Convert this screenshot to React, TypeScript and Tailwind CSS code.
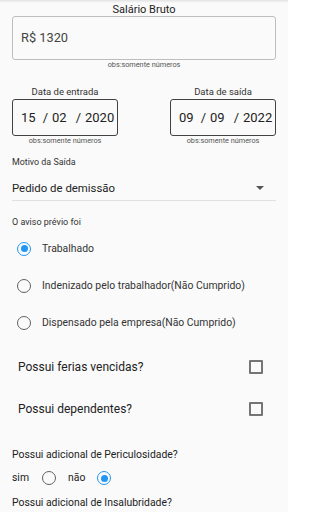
import React from "react";

const font = { fontFamily: "Roboto, 'Noto Sans', sans-serif" };

function Radio({ on }: { on?: boolean }) {
  return (
    <span
      className={`flex h-[14px] w-[14px] shrink-0 items-center justify-center rounded-full border-[1.6px] ${
        on ? "border-[#2196f3]" : "border-[#616161]"
      }`}
    >
      {on && <span className="h-[7px] w-[7px] rounded-full bg-[#2196f3]" />}
    </span>
  );
}

function Checkbox() {
  return <span className="h-[14px] w-[14px] shrink-0 rounded-[1px] border-2 border-[#757575]" />;
}

function DateField({ label, d, m, y }: { label: string; d: string; m: string; y: string }) {
  return (
    <div className="flex w-[106px] flex-col items-center">
      <div className="text-[9.5px] leading-[14px] text-[#333]">{label}</div>
      <div className="flex h-[37px] w-full items-center rounded-[3px] border border-[#424242] pl-[8px] text-[13px] leading-[16px] text-[#222]">
        <span>{d}</span>
        <span className="ml-[7px]">/</span>
        <span className="ml-[4px]">{m}</span>
        <span className="ml-[9px]">/</span>
        <span className="ml-[4px]">{y}</span>
      </div>
      <div className="text-[7.3px] leading-[10px] text-[#555]">obs:somente números</div>
    </div>
  );
}

export default function App() {
  return (
    <div
      className="h-[512px] w-[288px] overflow-hidden bg-[#fafafa] bg-[linear-gradient(to_bottom,#e2e2e2,#fafafa_3px)]"
      style={font}
    >
      <div className="px-[12px] pt-[3px]">
        {/* Salário */}
        <div className="text-center text-[11px] leading-[13px] text-[#222]">Salário Bruto</div>
        <div className="flex h-[44px] items-center rounded-[3px] border border-[#bdbdbd] px-[8px] text-[12.8px] text-[#444]">
          R$ 1320
        </div>
        <div className="text-center text-[7.3px] leading-[10px] text-[#555]">obs:somente números</div>

        {/* Datas */}
        <div className="mt-[15px] flex justify-between">
          <DateField label="Data de entrada" d="15" m="02" y="2020" />
          <DateField label="Data de saída" d="09" m="09" y="2022" />
        </div>

        {/* Motivo */}
        <div className="mt-[10px] text-[8.9px] leading-[12px] text-[#333]">Motivo da Saída</div>
        <div className="mt-[12px] flex items-center justify-between border-b border-[#e0e0e0] pb-[4px]">
          <span className="text-[11.4px] leading-[16px] text-[#222]">Pedido de demissão</span>
          <svg width="8" height="4" viewBox="0 0 10 5" className="mr-[12px]">
            <path d="M0 0 L10 0 L5 5 Z" fill="#555" />
          </svg>
        </div>

        {/* Aviso prévio */}
        <div className="mt-[15px] text-[9px] leading-[12px] text-[#333]">O aviso prévio foi</div>
        <div className="mt-[2px] flex flex-col">
          {[
            ["Trabalhado", true],
            ["Indenizado pelo trabalhador(Não Cumprido)", false],
            ["Dispensado pela empresa(Não Cumprido)", false],
          ].map(([t, on]) => (
            <div key={t as string} className="flex h-[37px] items-center">
              <span className="ml-[5px]">
                <Radio on={on as boolean} />
              </span>
              <span className="ml-[11px] text-[10.4px] leading-[14px] text-[#333]">{t as string}</span>
            </div>
          ))}
        </div>

        {/* Checkboxes */}
        <div className="mt-[5px] flex flex-col">
          <div className="flex h-[42px] items-center justify-between pl-[6px] pr-[13px]">
            <span className="text-[12px] leading-[16px] text-[#222]">Possui ferias vencidas?</span>
            <Checkbox />
          </div>
          <div className="flex h-[42px] items-center justify-between pl-[6px] pr-[13px]">
            <span className="text-[12px] leading-[16px] text-[#222]">Possui dependentes?</span>
            <Checkbox />
          </div>
        </div>

        {/* Adicionais */}
        <div className="mt-[18px] text-[10.4px] leading-[14px] text-[#222]">Possui adicional de Periculosidade?</div>
        <div className="mt-[7px] flex h-[18px] items-center text-[10.4px] leading-[14px] text-[#222]">
          <span>sim</span>
          <span className="ml-[13px]">
            <Radio />
          </span>
          <span className="ml-[12px]">não</span>
          <span className="ml-[12px]">
            <Radio on />
          </span>
        </div>
        <div className="mt-[9px] text-[10.4px] leading-[14px] text-[#222]">Possui adicional de Insalubridade?</div>
      </div>
    </div>
  );
}
